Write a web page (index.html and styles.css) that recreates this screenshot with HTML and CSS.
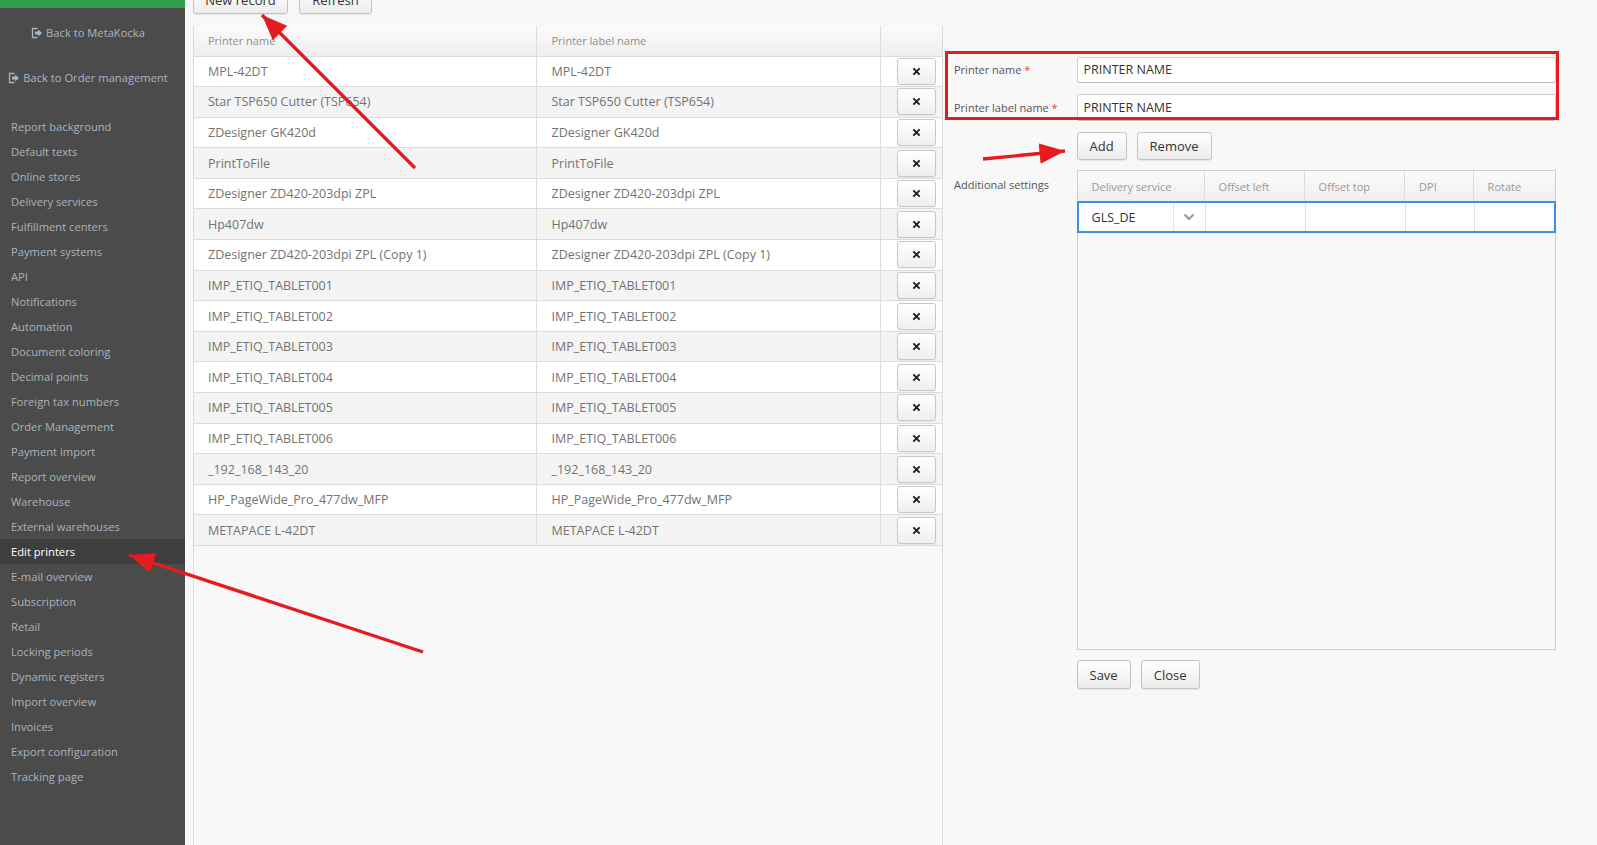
FILE: index.html
```html
<!DOCTYPE html>
<html>
<head>
<meta charset="utf-8">
<title>Edit printers</title>
<link rel="stylesheet" href="styles.css">
</head>
<body>
<div class="app">
  <aside class="sidebar">
    <div class="greenbar"></div>
    <a class="back back-first"><svg class="out" viewBox="0 0 12 12" width="12" height="12"><path d="M6.5 1.5H1.5v9h5" fill="none" stroke="currentColor" stroke-width="1.3"/><path d="M4 4.6h3.2V2.6L11 6l-3.8 3.4V7.4H4z" fill="currentColor"/></svg>Back to MetaKocka</a>
    <a class="back"><svg class="out" viewBox="0 0 12 12" width="12" height="12"><path d="M6.5 1.5H1.5v9h5" fill="none" stroke="currentColor" stroke-width="1.3"/><path d="M4 4.6h3.2V2.6L11 6l-3.8 3.4V7.4H4z" fill="currentColor"/></svg>Back to Order management</a>
    <ul class="menu">
      <li>Report background</li>
      <li>Default texts</li>
      <li>Online stores</li>
      <li>Delivery services</li>
      <li>Fulfillment centers</li>
      <li>Payment systems</li>
      <li>API</li>
      <li>Notifications</li>
      <li>Automation</li>
      <li>Document coloring</li>
      <li>Decimal points</li>
      <li>Foreign tax numbers</li>
      <li>Order Management</li>
      <li>Payment import</li>
      <li>Report overview</li>
      <li>Warehouse</li>
      <li>External warehouses</li>
      <li class="active">Edit printers</li>
      <li>E-mail overview</li>
      <li>Subscription</li>
      <li>Retail</li>
      <li>Locking periods</li>
      <li>Dynamic registers</li>
      <li>Import overview</li>
      <li>Invoices</li>
      <li>Export configuration</li>
      <li>Tracking page</li>
    </ul>
  </aside>

  <main class="main">
    <div class="toolbar">
      <button class="btn btn-new">New record</button>
      <button class="btn btn-refresh">Refresh</button>
    </div>
    <div class="content">
      <section class="list">
        <div class="row head"><div class="cell">Printer name</div><div class="cell">Printer label name</div><div class="cell last"></div></div>
        <div class="row"><div class="cell">MPL-42DT</div><div class="cell">MPL-42DT</div><div class="cell last"><button class="xbtn"><svg viewBox="0 0 10 10" width="9" height="9"><path d="M1.5 1.5l7 7M8.5 1.5l-7 7" stroke="#1e1e1e" stroke-width="2.1"/></svg></button></div></div>
        <div class="row"><div class="cell">Star TSP650 Cutter (TSP654)</div><div class="cell">Star TSP650 Cutter (TSP654)</div><div class="cell last"><button class="xbtn"><svg viewBox="0 0 10 10" width="9" height="9"><path d="M1.5 1.5l7 7M8.5 1.5l-7 7" stroke="#1e1e1e" stroke-width="2.1"/></svg></button></div></div>
        <div class="row"><div class="cell">ZDesigner GK420d</div><div class="cell">ZDesigner GK420d</div><div class="cell last"><button class="xbtn"><svg viewBox="0 0 10 10" width="9" height="9"><path d="M1.5 1.5l7 7M8.5 1.5l-7 7" stroke="#1e1e1e" stroke-width="2.1"/></svg></button></div></div>
        <div class="row"><div class="cell">PrintToFile</div><div class="cell">PrintToFile</div><div class="cell last"><button class="xbtn"><svg viewBox="0 0 10 10" width="9" height="9"><path d="M1.5 1.5l7 7M8.5 1.5l-7 7" stroke="#1e1e1e" stroke-width="2.1"/></svg></button></div></div>
        <div class="row"><div class="cell">ZDesigner ZD420-203dpi ZPL</div><div class="cell">ZDesigner ZD420-203dpi ZPL</div><div class="cell last"><button class="xbtn"><svg viewBox="0 0 10 10" width="9" height="9"><path d="M1.5 1.5l7 7M8.5 1.5l-7 7" stroke="#1e1e1e" stroke-width="2.1"/></svg></button></div></div>
        <div class="row"><div class="cell">Hp407dw</div><div class="cell">Hp407dw</div><div class="cell last"><button class="xbtn"><svg viewBox="0 0 10 10" width="9" height="9"><path d="M1.5 1.5l7 7M8.5 1.5l-7 7" stroke="#1e1e1e" stroke-width="2.1"/></svg></button></div></div>
        <div class="row"><div class="cell">ZDesigner ZD420-203dpi ZPL (Copy 1)</div><div class="cell">ZDesigner ZD420-203dpi ZPL (Copy 1)</div><div class="cell last"><button class="xbtn"><svg viewBox="0 0 10 10" width="9" height="9"><path d="M1.5 1.5l7 7M8.5 1.5l-7 7" stroke="#1e1e1e" stroke-width="2.1"/></svg></button></div></div>
        <div class="row"><div class="cell">IMP_ETIQ_TABLET001</div><div class="cell">IMP_ETIQ_TABLET001</div><div class="cell last"><button class="xbtn"><svg viewBox="0 0 10 10" width="9" height="9"><path d="M1.5 1.5l7 7M8.5 1.5l-7 7" stroke="#1e1e1e" stroke-width="2.1"/></svg></button></div></div>
        <div class="row"><div class="cell">IMP_ETIQ_TABLET002</div><div class="cell">IMP_ETIQ_TABLET002</div><div class="cell last"><button class="xbtn"><svg viewBox="0 0 10 10" width="9" height="9"><path d="M1.5 1.5l7 7M8.5 1.5l-7 7" stroke="#1e1e1e" stroke-width="2.1"/></svg></button></div></div>
        <div class="row"><div class="cell">IMP_ETIQ_TABLET003</div><div class="cell">IMP_ETIQ_TABLET003</div><div class="cell last"><button class="xbtn"><svg viewBox="0 0 10 10" width="9" height="9"><path d="M1.5 1.5l7 7M8.5 1.5l-7 7" stroke="#1e1e1e" stroke-width="2.1"/></svg></button></div></div>
        <div class="row"><div class="cell">IMP_ETIQ_TABLET004</div><div class="cell">IMP_ETIQ_TABLET004</div><div class="cell last"><button class="xbtn"><svg viewBox="0 0 10 10" width="9" height="9"><path d="M1.5 1.5l7 7M8.5 1.5l-7 7" stroke="#1e1e1e" stroke-width="2.1"/></svg></button></div></div>
        <div class="row"><div class="cell">IMP_ETIQ_TABLET005</div><div class="cell">IMP_ETIQ_TABLET005</div><div class="cell last"><button class="xbtn"><svg viewBox="0 0 10 10" width="9" height="9"><path d="M1.5 1.5l7 7M8.5 1.5l-7 7" stroke="#1e1e1e" stroke-width="2.1"/></svg></button></div></div>
        <div class="row"><div class="cell">IMP_ETIQ_TABLET006</div><div class="cell">IMP_ETIQ_TABLET006</div><div class="cell last"><button class="xbtn"><svg viewBox="0 0 10 10" width="9" height="9"><path d="M1.5 1.5l7 7M8.5 1.5l-7 7" stroke="#1e1e1e" stroke-width="2.1"/></svg></button></div></div>
        <div class="row"><div class="cell">_192_168_143_20</div><div class="cell">_192_168_143_20</div><div class="cell last"><button class="xbtn"><svg viewBox="0 0 10 10" width="9" height="9"><path d="M1.5 1.5l7 7M8.5 1.5l-7 7" stroke="#1e1e1e" stroke-width="2.1"/></svg></button></div></div>
        <div class="row"><div class="cell">HP_PageWide_Pro_477dw_MFP</div><div class="cell">HP_PageWide_Pro_477dw_MFP</div><div class="cell last"><button class="xbtn"><svg viewBox="0 0 10 10" width="9" height="9"><path d="M1.5 1.5l7 7M8.5 1.5l-7 7" stroke="#1e1e1e" stroke-width="2.1"/></svg></button></div></div>
        <div class="row"><div class="cell">METAPACE L-42DT</div><div class="cell">METAPACE L-42DT</div><div class="cell last"><button class="xbtn"><svg viewBox="0 0 10 10" width="9" height="9"><path d="M1.5 1.5l7 7M8.5 1.5l-7 7" stroke="#1e1e1e" stroke-width="2.1"/></svg></button></div></div>
      </section>

      <section class="editor">
        <div class="redbox"></div>
        <div class="frow">
          <label class="flabel">Printer name <span class="req">*</span></label>
          <div class="input">PRINTER NAME</div>
        </div>
        <div class="frow">
          <label class="flabel">Printer label name <span class="req">*</span></label>
          <div class="input">PRINTER NAME</div>
        </div>
        <div class="btnrow">
          <button class="btn btn-add">Add</button>
          <button class="btn btn-remove">Remove</button>
        </div>
        <div class="frow settings">
          <label class="flabel">Additional settings</label>
          <div class="grid">
            <div class="grow ghead">
              <div class="gc c1">Delivery service</div>
              <div class="gc c2">Offset left</div>
              <div class="gc c3">Offset top</div>
              <div class="gc c4">DPI</div>
              <div class="gc c5">Rotate</div>
            </div>
            <div class="grow gsel">
              <div class="gc c1 combo"><span class="cval">GLS_DE</span><span class="carrow"><svg viewBox="0 0 12 8" width="12" height="8"><path d="M1.5 1.5L6 6l4.5-4.5" fill="none" stroke="#9a9a9a" stroke-width="2.2"/></svg></span></div>
              <div class="gc c2"></div>
              <div class="gc c3"></div>
              <div class="gc c4"></div>
              <div class="gc c5"></div>
            </div>
          </div>
        </div>
        <div class="btnrow bottom">
          <button class="btn btn-save">Save</button>
          <button class="btn btn-close">Close</button>
        </div>
      </section>
    </div>
  </main>
</div>

<svg class="annot" width="1597" height="845" viewBox="0 0 1597 845">
  <defs>
    <marker id="ah" viewBox="0 0 10 8" refX="10" refY="4" markerWidth="7.5" markerHeight="6" orient="auto" markerUnits="strokeWidth">
      <path d="M0 0L10 4L0 8z" fill="#e41b1f"/>
    </marker>
  </defs>
  <line x1="415" y1="168" x2="262" y2="15" stroke="#e41b1f" stroke-width="3.4" marker-end="url(#ah)"/>
  <line x1="423" y1="652" x2="129" y2="555" stroke="#e41b1f" stroke-width="3.4" marker-end="url(#ah)"/>
  <line x1="983" y1="159" x2="1065" y2="151" stroke="#e41b1f" stroke-width="3.4" marker-end="url(#ah)"/>
</svg>
</body>
</html>
```

FILE: styles.css
```css
* { box-sizing: border-box; }

html, body {
  margin: 0;
  height: 845px;
  overflow: hidden;
}

body {
  font-family: "Open Sans", "DejaVu Sans", sans-serif;
  background: #f8f8f8;
  color: #333;
  position: relative;
}

.app {
  display: flex;
  height: 845px;
}

/* Sidebar */
.sidebar {
  width: 185px;
  flex: none;
  background: #4b4b4b;
}

.greenbar {
  height: 8px;
  background: #2f9d4a;
}

.back {
  display: flex;
  align-items: center;
  justify-content: center;
  gap: 3px;
  height: 45px;
  padding-right: 9px;
  color: #a8b6c4;
  font-size: 11.2px;
  white-space: nowrap;
}

.back-first { margin-top: 2px; }

.out { flex: none; }

.menu {
  list-style: none;
  margin: 13.8px 0 0;
  padding: 0;
}

.menu li {
  height: 25px;
  line-height: 25px;
  padding-left: 11px;
  font-size: 11.2px;
  color: #a9b3bd;
  white-space: nowrap;
}

.menu li.active {
  background: #3e3e3e;
  color: #ffffff;
}

/* Main */
.main {
  flex: 1;
  display: flex;
  flex-direction: column;
  padding-left: 8px;
  min-width: 0;
}

.toolbar {
  display: flex;
  gap: 11px;
  height: 28px;
  margin-top: -14px;
  flex: none;
}

.btn {
  font-family: "Open Sans", "DejaVu Sans", sans-serif;
  font-size: 13px;
  color: #333;
  height: 28px;
  padding: 0;
  white-space: nowrap;
  background: linear-gradient(#ffffff, #ececec);
  border: 1px solid #c4c4c4;
  border-radius: 3px;
  box-shadow: 0 1px 1px rgba(0, 0, 0, 0.08);
}

.btn-new { width: 95px; }
.btn-refresh { width: 73px; }

.content {
  display: flex;
  margin-top: 11.5px;
  flex: 1;
}

/* List */
.list {
  width: 750px;
  flex: none;
  border-left: 1px solid #dcdcdc;
  border-right: 1px solid #dcdcdc;
}

.row {
  display: grid;
  grid-template-columns: 343px 344px 1fr;
  height: 30.6px;
  border-bottom: 1px solid #dcdcdc;
  background: #ffffff;
}

.row:nth-child(odd) { background: #f4f4f4; }

.row.head {
  height: 31px;
  background: linear-gradient(#fbfbfb, #efefef);
}

.cell {
  display: flex;
  align-items: center;
  padding-left: 14px;
  border-right: 1px solid #dcdcdc;
  font-size: 12.5px;
  color: #737373;
  white-space: nowrap;
  overflow: hidden;
}

.row .cell:nth-child(2) { padding-left: 14.5px; }

.head .cell {
  font-size: 11px;
  color: #8f8f8f;
}

.cell.last {
  border-right: none;
  padding-left: 15.5px;
}

.xbtn {
  width: 39px;
  height: 27px;
  padding: 0;
  display: flex;
  align-items: center;
  justify-content: center;
  background: linear-gradient(#ffffff, #efefef);
  border: 1px solid #c8c8c8;
  border-radius: 3px;
  box-shadow: 0 1px 1px rgba(0, 0, 0, 0.06);
}

/* Editor */
.editor {
  flex: 1;
  position: relative;
  padding: 31px 41px 0 11px;
}

.redbox {
  position: absolute;
  left: 2px;
  top: 25.5px;
  width: 614px;
  height: 69px;
  border: 3.5px solid #e41b1f;
  pointer-events: none;
  z-index: 2;
}

.frow {
  display: flex;
  align-items: center;
  margin-bottom: 11.2px;
}

.flabel {
  width: 122.6px;
  flex: none;
  font-size: 11px;
  color: #555;
  white-space: nowrap;
}

.req { color: #e0473e; }

.input {
  flex: 1;
  height: 26.5px;
  display: flex;
  align-items: center;
  padding-left: 6px;
  background: #ffffff;
  border: 1px solid #cfcfcf;
  border-bottom-color: #bdbdbd;
  border-radius: 2px;
  font-size: 12.5px;
  color: #333;
}

.btnrow {
  display: flex;
  gap: 10px;
  margin: 1.5px 0 0 122.6px;
  height: 28.6px;
}

.btnrow .btn { height: 28.6px; }
.btn-add { width: 50px; }
.btn-remove { width: 75px; }

.settings {
  align-items: flex-start;
  margin-top: 10px;
  margin-bottom: 0;
}

.settings .flabel {
  padding-top: 7px;
}

.grid {
  flex: 1;
  height: 480px;
  border: 1px solid #cfcfcf;
}

.grow {
  display: grid;
  grid-template-columns: 127px 100px 100.5px 68.5px 1fr;
}

.ghead {
  height: 30.5px;
  background: linear-gradient(#fbfbfb, #efefef);
  border-bottom: 1px solid #dcdcdc;
}

.gc {
  display: flex;
  align-items: center;
  padding-left: 14px;
  border-right: 1px solid #dcdcdc;
  font-size: 11px;
  color: #999;
  white-space: nowrap;
}

.gc.c5 { border-right: none; }

.gsel {
  height: 32.5px;
  margin: -1px -1px 0;
  background: #ffffff;
  border: 2px solid #3f8fe6;
}

.gsel .gc { border-right-color: #e2e2e2; }

.combo {
  padding-left: 0;
  justify-content: space-between;
}

.cval {
  padding-left: 13px;
  font-size: 12.5px;
  color: #333;
}

.carrow {
  width: 32px;
  height: 100%;
  display: flex;
  align-items: center;
  justify-content: center;
  border-left: 1px solid #e6e6e6;
}

.btnrow.bottom {
  margin-top: 10px;
}

.btn-save { width: 54px; }
.btn-close { width: 59px; }

/* Annotations */
.annot {
  position: absolute;
  left: 0;
  top: 0;
  pointer-events: none;
  z-index: 5;
}
```
